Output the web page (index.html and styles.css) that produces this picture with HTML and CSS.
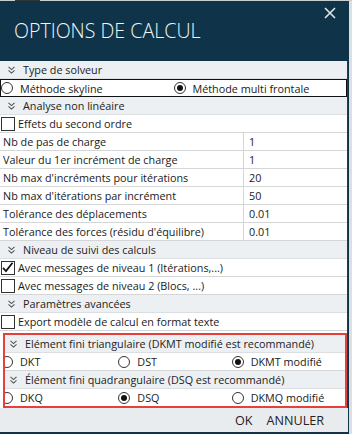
FILE: index.html
```html
<!DOCTYPE html>
<html lang="fr">
<head>
  <meta charset="UTF-8">
  <meta name="viewport" content="width=device-width, initial-scale=1.0">
  <title>Options de calcul</title>
  <link rel="stylesheet" href="styles.css">
</head>
<body>
  <div class="top-strip"><span></span></div>
  <div class="dialog">
    <header class="dialog-head">
      <h1>OPTIONS DE CALCUL</h1>
      <button class="close" aria-label="Fermer">
        <svg width="12" height="12" viewBox="0 0 12 12"><path d="M1 1 L11 11 M11 1 L1 11" stroke="#dfe6ea" stroke-width="1.6"/></svg>
      </button>
    </header>

    <div class="dialog-body">
      <div class="section"><svg class="chev" width="7" height="8" viewBox="0 0 7 8"><path d="M0.5 0.8 L3.5 3.6 L6.5 0.8 M0.5 4.3 L3.5 7.1 L6.5 4.3" fill="none" stroke="#555" stroke-width="1.1"/></svg>Type de solveur</div>
      <div class="row options focus">
        <label class="opt"><span class="radio"></span>Méthode skyline</label>
        <label class="opt"><span class="radio on"></span>Méthode multi frontale</label>
      </div>

      <div class="section"><svg class="chev" width="7" height="8" viewBox="0 0 7 8"><path d="M0.5 0.8 L3.5 3.6 L6.5 0.8 M0.5 4.3 L3.5 7.1 L6.5 4.3" fill="none" stroke="#555" stroke-width="1.1"/></svg>Analyse non linéaire</div>
      <div class="row"><span class="check"></span>Effets du second ordre</div>
      <div class="row field"><span class="label">Nb de pas de charge</span><span class="value">1</span></div>
      <div class="row field"><span class="label">Valeur du 1er incrément de charge</span><span class="value">1</span></div>
      <div class="row field"><span class="label">Nb max d'incréments pour itérations</span><span class="value">20</span></div>
      <div class="row field"><span class="label">Nb max d'itérations par incrément</span><span class="value">50</span></div>
      <div class="row field"><span class="label">Tolérance des déplacements</span><span class="value">0.01</span></div>
      <div class="row field"><span class="label">Tolérance des forces (résidu d'équilibre)</span><span class="value">0.01</span></div>

      <div class="section"><svg class="chev" width="7" height="8" viewBox="0 0 7 8"><path d="M0.5 0.8 L3.5 3.6 L6.5 0.8 M0.5 4.3 L3.5 7.1 L6.5 4.3" fill="none" stroke="#555" stroke-width="1.1"/></svg>Niveau de suivi des calculs</div>
      <div class="row"><span class="check on"><svg width="13" height="13" viewBox="0 0 13 13"><path d="M2 6.8 L5 10 L11.5 1.8" fill="none" stroke="#111" stroke-width="1.8"/></svg></span>Avec messages de niveau 1 (Itérations,...)</div>
      <div class="row"><span class="check"></span>Avec messages de niveau 2 (Blocs, ...)</div>

      <div class="section"><svg class="chev" width="7" height="8" viewBox="0 0 7 8"><path d="M0.5 0.8 L3.5 3.6 L6.5 0.8 M0.5 4.3 L3.5 7.1 L6.5 4.3" fill="none" stroke="#555" stroke-width="1.1"/></svg>Paramètres avancées</div>
      <div class="row"><span class="check"></span>Export modèle de calcul en format texte</div>

      <div class="highlight">
        <div class="section"><svg class="chev" width="7" height="8" viewBox="0 0 7 8"><path d="M0.5 0.8 L3.5 3.6 L6.5 0.8 M0.5 4.3 L3.5 7.1 L6.5 4.3" fill="none" stroke="#555" stroke-width="1.1"/></svg>Elément fini triangulaire (DKMT modifié est recommandé)</div>
        <div class="row options three">
          <label class="opt"><span class="radio"></span>DKT</label>
          <label class="opt"><span class="radio"></span>DST</label>
          <label class="opt"><span class="radio on"></span>DKMT modifié</label>
        </div>
        <div class="section"><svg class="chev" width="7" height="8" viewBox="0 0 7 8"><path d="M0.5 0.8 L3.5 3.6 L6.5 0.8 M0.5 4.3 L3.5 7.1 L6.5 4.3" fill="none" stroke="#555" stroke-width="1.1"/></svg>Élément fini quadrangulaire (DSQ est recommandé)</div>
        <div class="row options three">
          <label class="opt"><span class="radio"></span>DKQ</label>
          <label class="opt"><span class="radio on"></span>DSQ</label>
          <label class="opt"><span class="radio"></span>DKMQ modifié</label>
        </div>
      </div>
    </div>

    <footer class="actions">
      <button>OK</button>
      <button>ANNULER</button>
    </footer>
  </div>
</body>
</html>
```

FILE: styles.css
```css
body {
  margin: 0;
  background: #dde0e2;
  font-family: 'Open Sans', 'Noto Sans', sans-serif;
  font-size: 10.8px;
  color: #1a1a1a;
  overflow: hidden;
}

.top-strip {
  height: 1px;
  background: #c9cdd0;
}

.top-strip span {
  display: block;
  width: 25px;
  height: 1px;
  margin-left: 15px;
  background: #333;
}

.dialog {
  width: 349px;
  height: 433px;
  background: #0f3449;
  display: flex;
  flex-direction: column;
}

.dialog-head {
  height: 60px;
  position: relative;
  display: flex;
  align-items: center;
  padding-left: 14px;
}

.dialog-head h1 {
  margin: -2px 0 0;
  font-weight: 300;
  font-size: 19.6px;
  color: #f2f5f7;
}

.close {
  position: absolute;
  top: 6px;
  right: 13px;
  border: none;
  background: none;
  padding: 0;
  width: 12px;
  height: 12px;
}

.dialog-body {
  background: #fff;
  border-right: 1px solid #2d3a42;
  margin-right: 1px;
}

.section {
  height: 17px;
  border-bottom: 1px solid #dcdfe2;
  background: #edf0f2;
  display: flex;
  align-items: center;
  padding-left: 8px;
  color: #222;
  white-space: nowrap;
}

.chev {
  margin-right: 8px;
}

.row {
  height: 17px;
  border-bottom: 1px solid #d4d6d8;
  display: flex;
  align-items: center;
  white-space: nowrap;
}

.focus {
  border: 1px solid #111;
  height: 16px;
}

.options .opt {
  display: flex;
  align-items: center;
  width: 175px;
}

.three .opt {
  width: 116px;
}

.radio {
  width: 10px;
  height: 10px;
  border: 1px solid #333;
  border-radius: 50%;
  margin: 0 7px 0 0;
  position: relative;
  flex: none;
}

.radio.on::after {
  content: "";
  position: absolute;
  left: 2px;
  top: 2px;
  width: 6px;
  height: 6px;
  border-radius: 50%;
  background: #111;
}

.check {
  width: 12px;
  height: 12px;
  border: 1px solid #333;
  margin: 0 3px 0 1px;
  flex: none;
  position: relative;
}

.check svg {
  position: absolute;
  left: -1px;
  top: -1px;
}

.field .label {
  width: 240px;
  padding-left: 3px;
  border-right: 1px solid #d4d6d8;
  height: 17px;
  line-height: 17px;
}

.field .value {
  padding-left: 5px;
}

.highlight {
  margin: 2px 0 0 3px;
  border: 2px solid #e5403b;
  overflow: hidden;
}

.highlight .row {
  border-bottom: 1px solid #d4d6d8;
}

.highlight .row:last-child {
  border-bottom: none;
}

.highlight .options .opt:first-child .radio {
  margin-left: -4px;
}

.highlight .section {
  padding-left: 5px;
}

.actions {
  flex: 1;
  background: #e9ecee;
  margin-bottom: 2px;
  margin-right: 1px;
  display: flex;
  justify-content: flex-end;
  align-items: center;
  gap: 14px;
  padding-right: 24px;
}

.actions button {
  border: none;
  background: none;
  font-family: 'Open Sans', sans-serif;
  font-size: 12.6px;
  color: #222;
  padding: 0;
}
```
